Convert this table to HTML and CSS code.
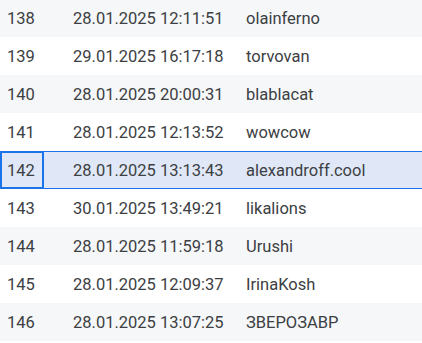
FILE: index.html
```html
<!DOCTYPE html>
<html>
<head>
<meta charset="utf-8">
<link rel="stylesheet" href="styles.css">
</head>
<body>
<div class="table">
  <div class="row alt"><div class="c num">138</div><div class="c date">28.01.2025 12:11:51</div><div class="c name">olainferno</div></div>
  <div class="row"><div class="c num">139</div><div class="c date">29.01.2025 16:17:18</div><div class="c name">torvovan</div></div>
  <div class="row alt"><div class="c num">140</div><div class="c date">28.01.2025 20:00:31</div><div class="c name">blablacat</div></div>
  <div class="row"><div class="c num">141</div><div class="c date">28.01.2025 12:13:52</div><div class="c name">wowcow</div></div>
  <div class="row selected"><div class="c num active">142</div><div class="c date">28.01.2025 13:13:43</div><div class="c name">alexandroff.cool</div></div>
  <div class="row"><div class="c num">143</div><div class="c date">30.01.2025 13:49:21</div><div class="c name">likalions</div></div>
  <div class="row alt"><div class="c num">144</div><div class="c date">28.01.2025 11:59:18</div><div class="c name">Urushi</div></div>
  <div class="row"><div class="c num">145</div><div class="c date">28.01.2025 12:09:37</div><div class="c name">IrinaKosh</div></div>
  <div class="row alt"><div class="c num">146</div><div class="c date">28.01.2025 13:07:25</div><div class="c name">ЗВЕРОЗАВР</div></div>
</div>
</body>
</html>
```
FILE: styles.css
```css
html, body {
  margin: 0;
  padding: 0;
  background: #ffffff;
  overflow: hidden;
}
.table {
  margin-top: -1px;
  font-family: Roboto, "Noto Sans", sans-serif;
  font-size: 16.5px;
  color: #3c4043;
}
.row {
  display: grid;
  grid-template-columns: 44px 198px 1fr;
  height: 38px;
  align-items: stretch;
}
.row.alt {
  background: #f6f7f9;
}
.row.selected {
  background: #e0e8f7;
  box-shadow: inset 0 1px 0 #1a73e8, inset 0 -1px 0 #1a73e8;
}
.c {
  display: flex;
  align-items: center;
  white-space: nowrap;
}
.num {
  padding-left: 7px;
}
.date {
  padding-left: 29px;
}
.name {
  padding-left: 4px;
}
.active {
  box-shadow: inset 0 0 0 2px #1a73e8;
}
```
